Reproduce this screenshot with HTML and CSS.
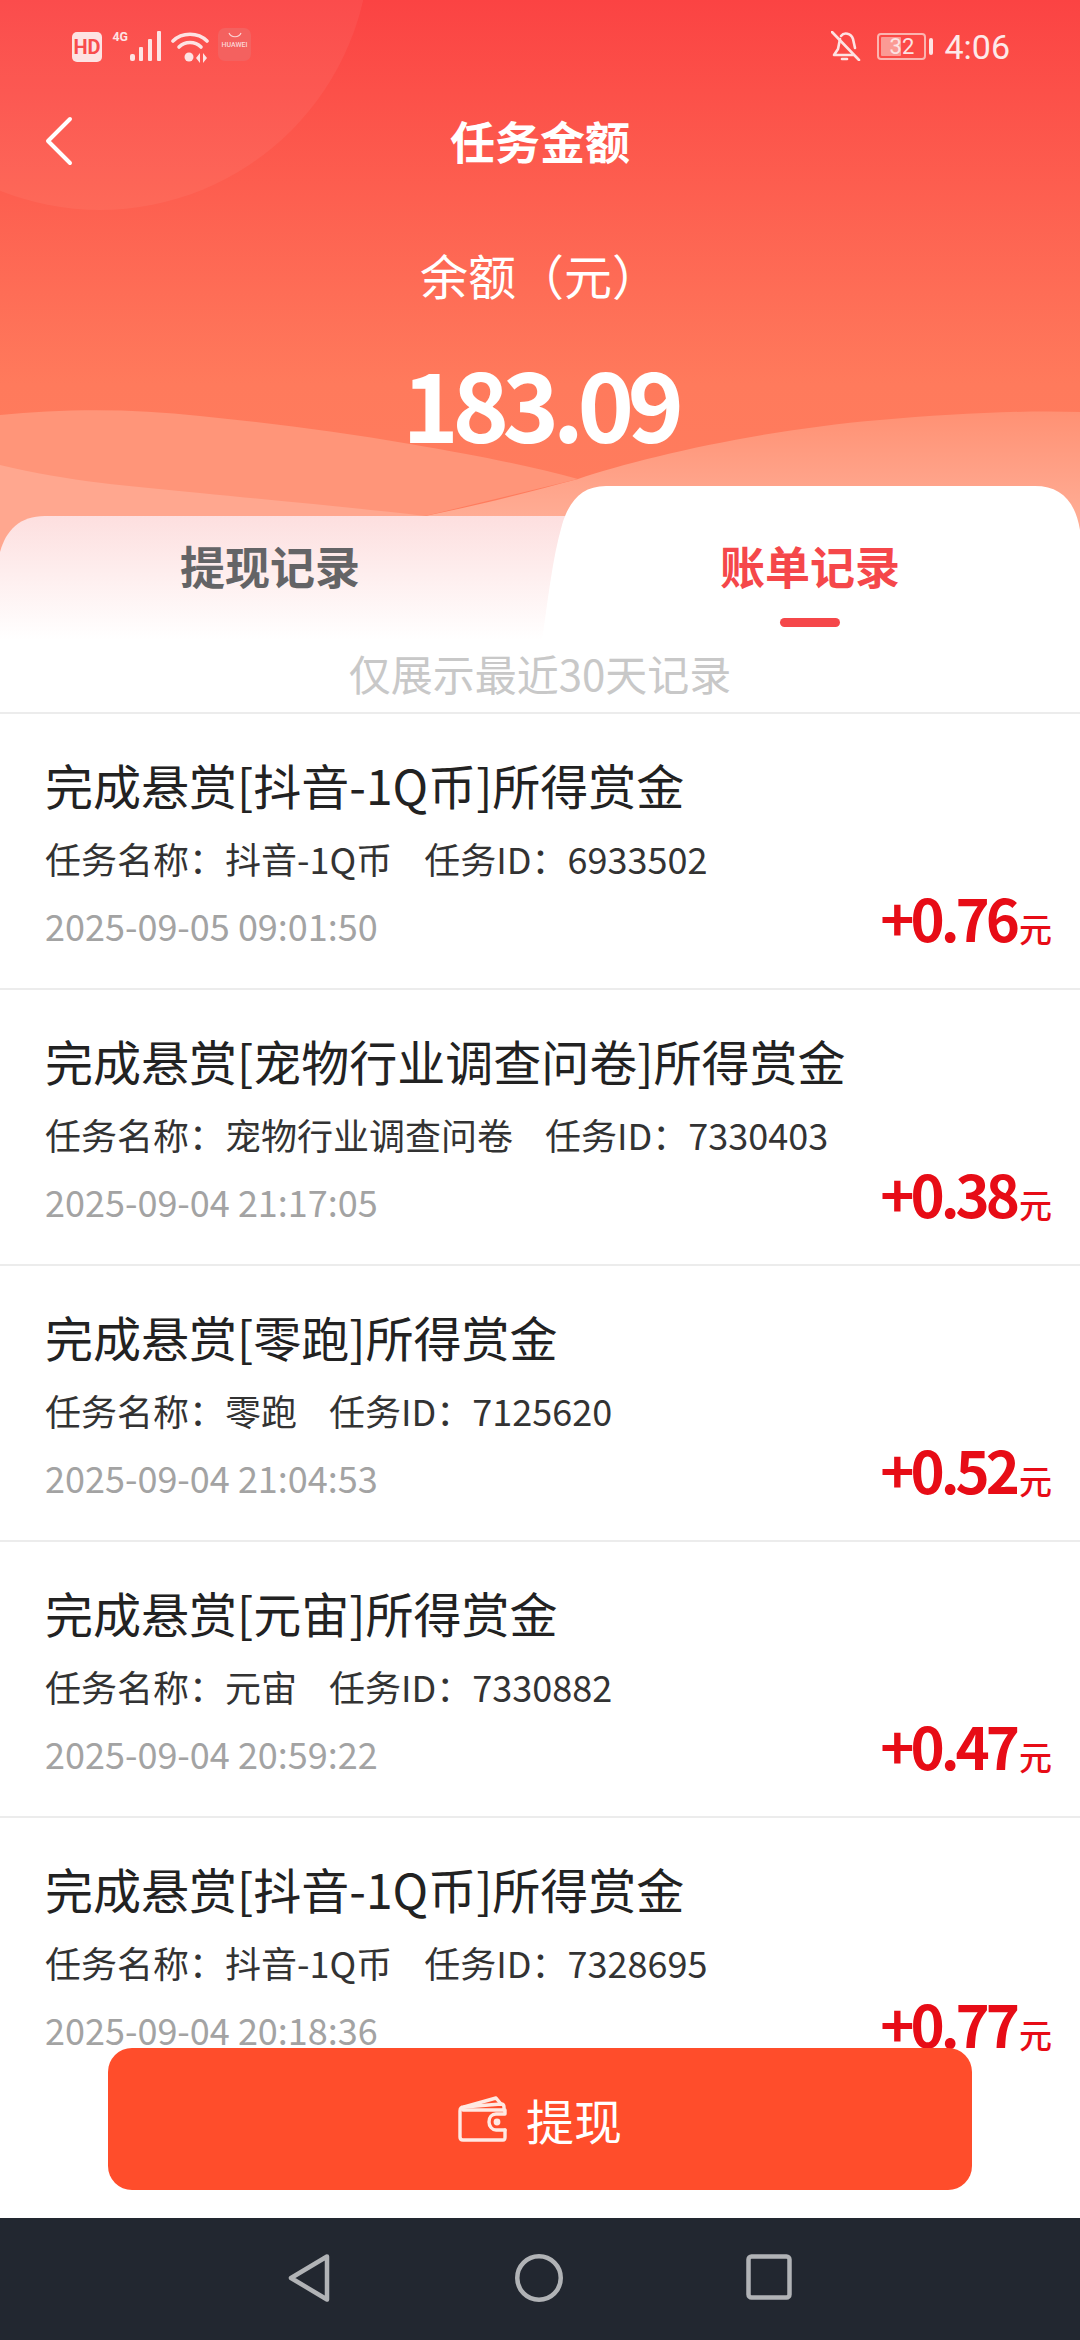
FILE: index.html
```html
<!DOCTYPE html>
<html>
<head>
    <meta charset="utf-8">
    <title>任务金额</title>
    <link rel="stylesheet" href="styles.css">
</head>
<body>
<div class="page">

    <div class="hero">
        <!-- background: gradient, circle, waves and the two tab shapes -->
        <svg class="hero-bg" width="1080" height="640" viewBox="0 0 1080 640">
            <defs>
                <linearGradient id="sky" x1="0" y1="0" x2="0" y2="1">
                    <stop offset="0" stop-color="#fb4343"/>
                    <stop offset="0.6" stop-color="#ff7a5c"/>
                    <stop offset="1" stop-color="#ff7f60"/>
                </linearGradient>
                <linearGradient id="wave" gradientUnits="userSpaceOnUse" x1="0" y1="412" x2="0" y2="516">
                    <stop offset="0" stop-color="#ff9174"/>
                    <stop offset="1" stop-color="#ffac94"/>
                </linearGradient>
                <linearGradient id="tabfade" x1="0" y1="0" x2="0" y2="1">
                    <stop offset="0" stop-color="#fddfdf"/>
                    <stop offset="1" stop-color="#ffffff"/>
                </linearGradient>
            </defs>
            <rect width="1080" height="640" fill="url(#sky)"/>
            <circle cx="100" cy="-60" r="270" fill="#ffffff" fill-opacity="0.05"/>
            <path d="M425 516 C480 505 530 492 578 479 C640 458 760 430 880 420 C950 414 1020 410 1080 412 L1080 640 L425 640 Z" fill="url(#wave)"/>
            <path d="M0 415 C60 409 130 408 200 416 C270 423 340 432 410 444 C480 456 530 466 578 479 L425 516 L0 516 Z" fill="#ff9579"/>
            <path d="M0 465 C70 482 130 486 200 493 C280 501 350 507 425 516 L425 640 L0 640 Z" fill="#ffa78f"/>
            <path d="M0 552 C6 530 20 516 45 516 L575 516 L575 640 L0 640 Z" fill="url(#tabfade)"/>
            <path d="M542 640 C548 600 552 560 562 525 C569 501 582 486 606 486 L1035 486 C1060 486 1075 500 1080 530 L1080 640 Z" fill="#ffffff"/>
        </svg>

        <div class="status-bar">
            <div class="status-left">
                <span class="hd">HD</span>
                <span class="net">4G</span>
                <svg width="32" height="30" viewBox="0 0 32 30">
                    <g fill="#fde3e3">
                        <rect x="0" y="23" width="5" height="7" rx="2"/>
                        <rect x="9" y="16" width="4" height="14" rx="1"/>
                        <rect x="18" y="8" width="4" height="22" rx="1"/>
                        <rect x="27" y="0" width="4" height="30" rx="1"/>
                    </g>
                </svg>
                <svg class="wifi" width="38" height="32" viewBox="0 0 38 32">
                    <g fill="none" stroke="#fde3e3" stroke-width="3.6" stroke-linecap="round">
                        <path d="M2 10 C11 1 27 1 36 10"/>
                        <path d="M8 16 C14 10 24 10 30 16"/>
                    </g>
                    <circle cx="18" cy="26" r="4.5" fill="#fde3e3"/>
                    <path d="M29 22 L25 27 L29 32 Z M32 22 L36 27 L32 32 Z" fill="#fde3e3"/>
                </svg>
                <span class="hw">
                    <svg width="14" height="7" viewBox="0 0 14 7"><path d="M1 1 C3 6 11 6 13 1" fill="none" stroke="#fbd5d5" stroke-width="1.2"/></svg>
                    <span class="hw-name">HUAWEI</span>
                </span>
            </div>
            <div class="status-right">
                <svg width="30" height="30" viewBox="0 0 30 30">
                    <g fill="none" stroke="#fde3e3" stroke-width="2.6" stroke-linejoin="round" stroke-linecap="round">
                        <path d="M9 8 L7 18 L3 24 L22 24"/>
                        <path d="M10 5 C13 1 20 2 22 8 L24 17"/>
                        <path d="M1 1 L28 29"/>
                        <path d="M11 28 L16 28"/>
                    </g>
                </svg>
                <span class="battery"><span class="battery-fill"></span><span class="battery-num">32</span></span>
                <span class="battery-nub"></span>
                <span class="clock">4:06</span>
            </div>
        </div>

        <div class="title-bar">
            <svg class="back" width="30" height="50" viewBox="0 0 30 50">
                <path d="M26 3 L4 25 L26 47" fill="none" stroke="#ffffff" stroke-width="4" stroke-linecap="round" stroke-linejoin="round"/>
            </svg>
            <span class="title">任务金额</span>
        </div>

        <div class="balance-label">余额（元）</div>
        <div class="balance">183.09</div>

        <div class="tabs">
            <div class="tab">提现记录</div>
            <div class="tab tab-active">账单记录<span class="tab-line"></span></div>
        </div>
    </div>

    <div class="note">仅展示最近30天记录</div>

    <div class="list">
        <div class="row">
            <div class="row-info">
                <div class="row-title">完成悬赏[抖音-1Q币]所得赏金</div>
                <div class="row-sub"><span>任务名称：抖音-1Q币</span><span>任务ID：6933502</span></div>
                <div class="row-date">2025-09-05 09:01:50</div>
            </div>
            <div class="amount">+0.76<small>元</small></div>
        </div>
        <div class="row">
            <div class="row-info">
                <div class="row-title">完成悬赏[宠物行业调查问卷]所得赏金</div>
                <div class="row-sub"><span>任务名称：宠物行业调查问卷</span><span>任务ID：7330403</span></div>
                <div class="row-date">2025-09-04 21:17:05</div>
            </div>
            <div class="amount">+0.38<small>元</small></div>
        </div>
        <div class="row">
            <div class="row-info">
                <div class="row-title">完成悬赏[零跑]所得赏金</div>
                <div class="row-sub"><span>任务名称：零跑</span><span>任务ID：7125620</span></div>
                <div class="row-date">2025-09-04 21:04:53</div>
            </div>
            <div class="amount">+0.52<small>元</small></div>
        </div>
        <div class="row">
            <div class="row-info">
                <div class="row-title">完成悬赏[元宙]所得赏金</div>
                <div class="row-sub"><span>任务名称：元宙</span><span>任务ID：7330882</span></div>
                <div class="row-date">2025-09-04 20:59:22</div>
            </div>
            <div class="amount">+0.47<small>元</small></div>
        </div>
        <div class="row">
            <div class="row-info">
                <div class="row-title">完成悬赏[抖音-1Q币]所得赏金</div>
                <div class="row-sub"><span>任务名称：抖音-1Q币</span><span>任务ID：7328695</span></div>
                <div class="row-date">2025-09-04 20:18:36</div>
            </div>
            <div class="amount">+0.77<small>元</small></div>
        </div>
    </div>

    <div class="footer">
        <button type="button" class="withdraw">
            <svg width="50" height="46" viewBox="0 0 50 46">
                <g fill="none" stroke="#ffe9e3" stroke-width="3.4" stroke-linejoin="round" stroke-linecap="round">
                    <path d="M46 14 L46 11 C46 9 45 8 43 8 L6 11 C3 11 2 13 2 15 L2 41 C2 43 3 44 5 44 L45 44 C47 44 47 43 47 41 L47 34"/>
                    <path d="M47 34 L38 34 C34 34 31 30 31 26 C31 21 34 18 38 18 L47 18 L47 14 L5 14"/>
                    <path d="M6 11 L38 2 L43 8"/>
                </g>
                <circle cx="39" cy="26" r="3.4" fill="#ffe9e3"/>
            </svg>
            <span>提现</span>
        </button>
    </div>

    <div class="nav-bar">
        <svg width="44" height="48" viewBox="0 0 44 48">
            <path d="M39 2.5 L3 24 L39 45.5 Z" fill="none" stroke="#b1b3b6" stroke-width="4.5" stroke-linejoin="round"/>
        </svg>
        <svg width="48" height="48" viewBox="0 0 48 48">
            <circle cx="24" cy="24" r="21.75" fill="none" stroke="#b1b3b6" stroke-width="4.5"/>
        </svg>
        <svg width="46" height="46" viewBox="0 0 46 46">
            <rect x="2.5" y="2.5" width="41" height="41" rx="3" fill="none" stroke="#b1b3b6" stroke-width="4.5"/>
        </svg>
    </div>

</div>
</body>
</html>
```

FILE: styles.css
```css
* {
    box-sizing: border-box;
}

body {
    margin: 0;
    background: #fff;
    font-family: "Noto Sans CJK SC", "Noto Sans", sans-serif;
}

.page {
    width: 1080px;
    height: 2340px;
    display: flex;
    flex-direction: column;
    overflow: hidden;
}

/* top red area */
.hero {
    position: relative;
    height: 640px;
    flex: none;
    color: #fff;
}

.hero-bg {
    position: absolute;
    top: 0;
    left: 0;
    display: block;
}

.status-bar {
    position: relative;
    height: 106px;
    padding: 28px 72px 0;
    display: flex;
    justify-content: space-between;
    align-items: flex-start;
}

.status-left {
    display: flex;
    align-items: flex-start;
    height: 34px;
}

.hd {
    width: 30px;
    height: 30px;
    margin-top: 4px;
    border-radius: 5px;
    background: #fde3e3;
    color: #f84c4c;
    font-family: "Roboto", sans-serif;
    font-size: 20px;
    font-weight: 700;
    line-height: 30px;
    text-align: center;
}

.net {
    width: 18px;
    margin-left: 10px;
    margin-top: 1px;
    color: #fde3e3;
    font-family: "Roboto", sans-serif;
    font-size: 13px;
    font-weight: 700;
    line-height: 16px;
    transform: scaleX(0.95);
}

.status-left > svg {
    margin-top: 3px;
}

.status-left .wifi {
    margin-left: 9px;
}

.hw {
    width: 33px;
    height: 33px;
    margin-left: 9px;
    border-radius: 7px;
    background: #f4615f;
    display: flex;
    flex-direction: column;
    align-items: center;
    padding-top: 4px;
}

.hw svg {
    display: block;
}

.hw-name {
    margin-top: 1px;
    color: #fbd5d5;
    font-family: "Roboto", sans-serif;
    font-size: 7px;
    font-weight: 500;
    line-height: 10px;
}

.status-right {
    display: flex;
    align-items: center;
    height: 34px;
}

.status-right > svg {
    margin-top: 2px;
}

.battery {
    position: relative;
    width: 49px;
    height: 27px;
    margin-left: 16px;
    margin-top: 2px;
    border: 2px solid #fbb5b0;
    border-radius: 4px;
    display: block;
}

.battery-fill {
    position: absolute;
    left: 2px;
    top: 2px;
    bottom: 2px;
    width: 20px;
    background: #fb9a94;
    border-radius: 1px;
}

.battery-num {
    position: absolute;
    left: 0;
    right: 0;
    top: 0;
    color: #fde3e3;
    font-family: "Roboto", sans-serif;
    font-size: 22px;
    line-height: 23px;
    text-align: center;
}

.battery-nub {
    width: 4px;
    height: 17px;
    margin-left: 3px;
    margin-top: 2px;
    background: #fde3e3;
    border-radius: 2px;
}

.clock {
    margin-left: 11px;
    margin-right: -2px;
    margin-top: 4px;
    color: #fde9e9;
    font-family: "Roboto", sans-serif;
    font-size: 34px;
    line-height: 34px;
}

.title-bar {
    position: relative;
    height: 70px;
    display: flex;
    align-items: center;
    justify-content: center;
}

.back {
    position: absolute;
    left: 44px;
    top: 10px;
}

.title {
    font-size: 45px;
    font-weight: 700;
    line-height: 70px;
}

.balance-label {
    position: relative;
    margin-top: 68px;
    height: 60px;
    font-size: 48px;
    line-height: 60px;
    text-align: center;
}

.balance {
    position: relative;
    margin-top: 48px;
    height: 100px;
    font-size: 96px;
    font-weight: 700;
    letter-spacing: -6.5px;
    line-height: 100px;
    text-align: center;
}

.tabs {
    position: relative;
    display: flex;
    margin-top: 79px;
}

.tab {
    position: relative;
    width: 540px;
    height: 70px;
    color: #646466;
    font-size: 45px;
    font-weight: 700;
    line-height: 70px;
    text-align: center;
}

.tab-active {
    color: #f5474a;
}

.tab-line {
    position: absolute;
    left: 240px;
    top: 87px;
    width: 60px;
    height: 9px;
    border-radius: 5px;
    background: #f5474a;
}

.note {
    height: 74px;
    flex: none;
    border-bottom: 2px solid #ececec;
    color: #c8c8c8;
    font-size: 42px;
    line-height: 66px;
    text-align: center;
}

/* record list, the last row runs on behind the button */
.list {
    flex: 1;
    min-height: 0;
}

.row {
    height: 276px;
    padding: 34px 28px 0 45px;
    border-bottom: 2px solid #ececec;
    display: flex;
    justify-content: space-between;
}

.row:last-child {
    border-bottom: 0;
}

.row-title {
    color: #222;
    font-size: 48px;
    line-height: 72px;
}

.row-sub {
    margin-top: 8px;
    display: flex;
    gap: 32px;
    color: #333;
    font-size: 36px;
    line-height: 60px;
}

.row-date {
    margin-top: 7px;
    color: #a3a3a3;
    font-size: 36px;
    line-height: 60px;
}

.amount {
    align-self: flex-end;
    margin-bottom: 25px;
    color: #e70c16;
    font-size: 58px;
    font-weight: 700;
    letter-spacing: -4px;
    line-height: 70px;
    white-space: nowrap;
}

.amount small {
    margin-left: 3px;
    font-size: 33px;
    font-weight: 500;
    letter-spacing: 0;
}

.footer {
    position: relative;
    height: 170px;
    flex: none;
    padding: 0 108px 28px;
}

.withdraw {
    width: 100%;
    height: 142px;
    border: 0;
    border-radius: 24px;
    background: #ff4d2b;
    color: #fff;
    font-family: inherit;
    font-size: 48px;
    display: flex;
    align-items: center;
    justify-content: center;
    gap: 18px;
}

.nav-bar {
    position: relative;
    height: 122px;
    flex: none;
    background: #222730;
    padding: 36px 288px 0;
    display: flex;
    justify-content: space-between;
    align-items: flex-start;
}
```
